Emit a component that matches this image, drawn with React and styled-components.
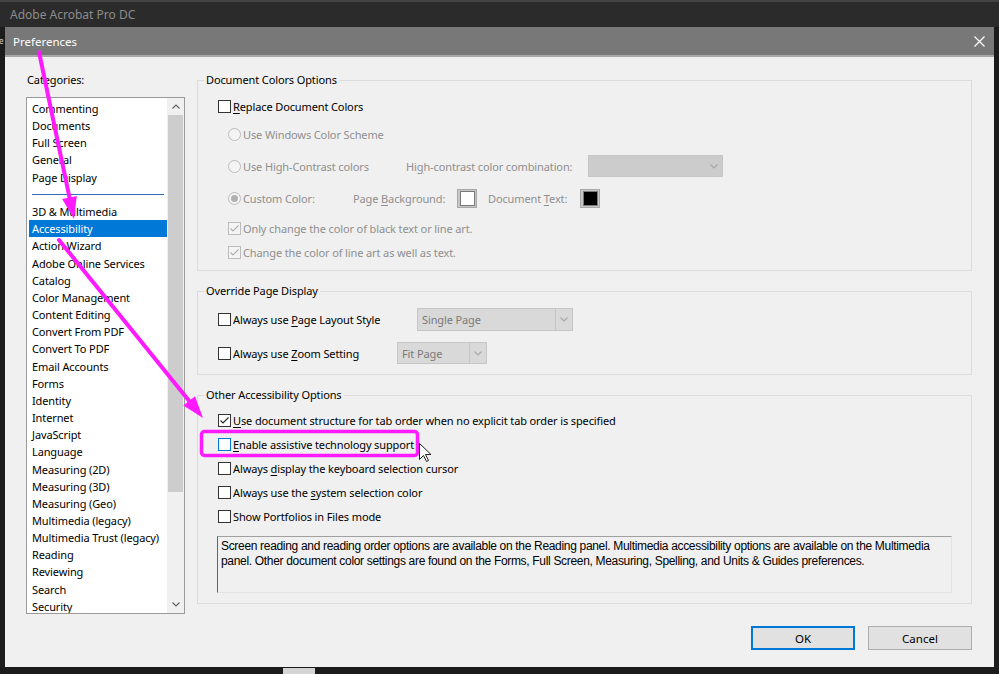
import React from 'react';
import styled, { createGlobalStyle } from 'styled-components';

const GlobalStyle = createGlobalStyle`
  html, body { margin: 0; padding: 0; }
  body {
    background: #1f1f1f;
    font-family: "Noto Sans", "Liberation Sans", Arial, sans-serif;
    font-size: 11px;
    letter-spacing: -0.12px;
    color: #000;
  }
  * { box-sizing: border-box; }
`;

const MAGENTA = '#ff1aff';

const Screen = styled.div`
  position: relative;
  width: 999px;
  height: 674px;
  overflow: hidden;
  background: #1f1f1f;
  display: flex;
  flex-direction: column;
`;

const AppBar = styled.div`
  flex: none;
  height: 27px;
  background: #2b2b2b;
  border-top: 2px solid #444;
  display: flex;
  align-items: center;
  padding-left: 10px;
  color: #8c8c8c;
  font-size: 12px;
  letter-spacing: 0;
`;

const Middle = styled.div`
  flex: none;
  height: 640px;
  display: flex;
`;

const SideStrip = styled.div`
  flex: none;
  width: ${({ $w }) => $w}px;
  background: #1c1c1c;
  overflow: hidden;
  color: #d0d0d0;
  font-size: 8px;
  padding-top: 8px;
  text-indent: -1px;
`;

const BottomStrip = styled.div`
  flex: 1;
  background: #1b1b1b;
  display: flex;
  padding-left: 283px;
`;

const Chip = styled.div`
  width: 32px;
  height: 6px;
  margin-top: 1px;
  background: #d4d4d4;
`;

const Dialog = styled.div`
  flex: none;
  width: 989px;
  display: flex;
  flex-direction: column;
  background: #f0f0f0;
`;

const TitleBar = styled.div`
  height: 30px;
  flex: none;
  background: #787878;
  border-bottom: 2px solid #a8a8a8;
  display: flex;
  align-items: center;
  justify-content: space-between;
  padding: 0 9px 0 8px;
  color: #fff;
  font-size: 11.5px;
  letter-spacing: 0;
`;

const Body = styled.div`
  flex: 1;
  padding: 15px 22px 0 21px;
  display: flex;
  flex-direction: column;
`;

const Columns = styled.div`
  display: flex;
  gap: 12px;
  align-items: flex-start;
`;

const LeftCol = styled.div`
  width: 159px;
  flex: none;
`;

const RightCol = styled.div`
  flex: 1;
  display: flex;
  flex-direction: column;
`;

const FieldLabel = styled.div`
  line-height: 16px;
  height: 16px;
  margin: 0 0 9px 1px;
`;

const ListBox = styled.div`
  height: 517px;
  border: 1px solid #9a9a9a;
  background: #fff;
  display: flex;
  overflow: hidden;
`;

const Items = styled.div`
  flex: 1;
  padding: 2px 0 0 2px;
  overflow: hidden;
`;

const Item = styled.div`
  height: 17.17px;
  line-height: 17.17px;
  padding-left: 3px;
  white-space: nowrap;
  background: ${({ $selected }) => ($selected ? '#0078d7' : 'transparent')};
  color: ${({ $selected }) => ($selected ? '#fff' : '#000')};
`;

const Separator = styled.div`
  height: 17.4px;
  display: flex;
  align-items: center;
  padding: 0 3px 0 3px;
  &::after {
    content: '';
    flex: 1;
    height: 1px;
    background: #2f6fb8;
  }
`;

const ScrollBar = styled.div`
  width: 17px;
  flex: none;
  background: #f0f0f0;
  display: flex;
  flex-direction: column;
`;

const ScrollBtn = styled.div`
  height: 17px;
  flex: none;
  display: flex;
  align-items: center;
  justify-content: center;
  margin-top: ${({ $end }) => ($end ? 'auto' : '0')};
`;

const Thumb = styled.div`
  height: 377px;
  margin: 0 1px;
  background: #cdcdcd;
`;

const Group = styled.fieldset`
  margin: ${({ $first }) => ($first ? '0' : '12px 0 0')};
  padding: 0;
  border: 1px solid #dcdcdc;
  min-inline-size: 0;
`;

const Legend = styled.legend`
  margin-left: 6px;
  padding: 0 2px;
  line-height: 16px;
  height: 16px;
`;

const GroupBody = styled.div`
  padding: ${({ $pad }) => $pad};
`;

const Row = styled.div`
  height: ${({ $h }) => $h}px;
  display: flex;
  align-items: center;
  padding-left: ${({ $indent }) => $indent || 0}px;
  margin-top: ${({ $mt }) => $mt || 0}px;
  white-space: nowrap;
`;

const Text = styled.span`
  display: inline-block;
  width: ${({ $w }) => ($w ? `${$w}px` : 'auto')};
  flex: none;
  color: ${({ $muted }) => ($muted ? '#8f8f8f' : '#000')};
`;

const Key = styled.span`
  text-decoration: underline;
  text-underline-offset: 2px;
`;

const Box = styled.span`
  flex: none;
  width: 13px;
  height: 13px;
  margin-right: 2px;
  border: 1px solid
    ${({ $disabled, $focus }) => ($disabled ? '#bcbcbc' : $focus ? '#0078d7' : '#333')};
  background: ${({ $disabled }) => ($disabled ? '#f4f4f4' : '#fff')};
  display: flex;
  align-items: center;
  justify-content: center;
`;

const Radio = styled.span`
  flex: none;
  width: 13px;
  height: 13px;
  margin-right: 2px;
  border-radius: 50%;
  border: 1px solid #bcbcbc;
  background: #f4f4f4;
  display: flex;
  align-items: center;
  justify-content: center;
  &::after {
    content: '';
    display: ${({ $checked }) => ($checked ? 'block' : 'none')};
    width: 7px;
    height: 7px;
    border-radius: 50%;
    background: #b0b0b0;
  }
`;

const Select = styled.div`
  flex: none;
  width: ${({ $w }) => $w}px;
  height: ${({ $h }) => $h}px;
  border: 1px solid #c6c6c6;
  background: ${({ $flat }) => ($flat ? '#cccccc' : '#d9d9d9')};
  display: flex;
  align-items: center;
  color: #7a7a7a;
`;

const SelectValue = styled.span`
  flex: 1;
  padding-left: 4px;
`;

const SelectArrow = styled.span`
  width: 17px;
  align-self: stretch;
  display: flex;
  align-items: center;
  justify-content: center;
  border-left: 1px solid ${({ $flat }) => ($flat ? 'transparent' : '#c6c6c6')};
`;

const Swatch = styled.span`
  flex: none;
  width: 20px;
  height: 19px;
  margin-right: ${({ $mr }) => $mr || 0}px;
  border: 1px solid #a9a9a9;
  background: #c6c6c6;
  display: flex;
  align-items: center;
  justify-content: center;
  &::after {
    content: '';
    width: 13px;
    height: 13px;
    border: 1px solid #7a7a7a;
    background: ${({ $color }) => $color};
  }
`;

const InfoBox = styled.div`
  width: 735px;
  height: 57px;
  margin: 8px 0 0 -1px;
  padding: 2px 3px;
  border-style: solid;
  border-width: 1px;
  border-color: #a0a0a0 #e3e3e3 #e3e3e3 #646464;
  font-family: "Liberation Sans", Arial, sans-serif;
  font-size: 12px;
  letter-spacing: -0.32px;
  line-height: 15px;
  white-space: nowrap;
`;

const ButtonRow = styled.div`
  display: flex;
  justify-content: flex-end;
  gap: 13px;
  margin-top: 12px;
`;

const Button = styled.button`
  width: 104px;
  height: 24px;
  font: inherit;
  font-size: 11.5px;
  color: #000;
  background: #e1e1e1;
  border: ${({ $primary }) => ($primary ? '2px solid #0078d7' : '1px solid #adadad')};
  padding: 0;
`;

const Overlay = styled.svg`
  position: absolute;
  left: 0;
  top: 0;
  pointer-events: none;
`;

const categories = [
  'Commenting', 'Documents', 'Full Screen', 'General', 'Page Display', null,
  '3D & Multimedia', 'Accessibility', 'Action Wizard', 'Adobe Online Services',
  'Catalog', 'Color Management', 'Content Editing', 'Convert From PDF',
  'Convert To PDF', 'Email Accounts', 'Forms', 'Identity', 'Internet',
  'JavaScript', 'Language', 'Measuring (2D)', 'Measuring (3D)', 'Measuring (Geo)',
  'Multimedia (legacy)', 'Multimedia Trust (legacy)', 'Reading', 'Reviewing',
  'Search', 'Security',
];

const Chevron = ({ up, color = '#606060' }) => (
  <svg width="8" height="5" viewBox="0 0 8 5">
    <polyline
      points={up ? '0.5,4.5 4,1 7.5,4.5' : '0.5,0.5 4,4 7.5,0.5'}
      fill="none"
      stroke={color}
      strokeWidth="1.1"
    />
  </svg>
);

const Check = ({ color }) => (
  <svg width="11" height="11" viewBox="0 0 11 11">
    <polyline points="1.5,5.5 4,8 9.5,2.5" fill="none" stroke={color} strokeWidth="1.1" />
  </svg>
);

const CheckBox = ({ checked, disabled, focus }) => (
  <Box $disabled={disabled} $focus={focus}>
    {checked && <Check color={disabled ? '#b0b0b0' : '#222'} />}
  </Box>
);

const Arrow = ({ from, to, len = 22, half = 7.5 }) => {
  const [x1, y1] = from;
  const [x2, y2] = to;
  const l = Math.hypot(x2 - x1, y2 - y1);
  const ux = (x2 - x1) / l;
  const uy = (y2 - y1) / l;
  const bx = x2 - ux * len;
  const by = y2 - uy * len;
  return (
    <g>
      <line x1={x1} y1={y1} x2={bx + ux * 2} y2={by + uy * 2} stroke={MAGENTA} strokeWidth="4" strokeLinecap="round" />
      <polygon
        points={`${x2},${y2} ${bx - uy * half},${by + ux * half} ${bx + uy * half},${by - ux * half}`}
        fill={MAGENTA}
      />
    </g>
  );
};

const Annotations = () => (
  <Overlay width="999" height="674" viewBox="0 0 999 674">
    <Arrow from={[39, 52]} to={[74, 219]} />
    <Arrow from={[59, 240]} to={[203, 418]} />
    <rect x="201.5" y="431.5" width="216" height="24" rx="3" fill="none" stroke={MAGENTA} strokeWidth="3.5" />
    <path
      d="M419.5 443.5 L419.5 459.5 L423.5 455.5 L426.5 461.5 L428.5 460.5 L425.5 454.5 L431 454.5 Z"
      fill="#fff"
      stroke="#222"
      strokeWidth="1"
      strokeLinejoin="round"
    />
  </Overlay>
);

const CloseIcon = () => (
  <svg width="11" height="11" viewBox="0 0 11 11">
    <path d="M0.5 0.5 L10.5 10.5 M10.5 0.5 L0.5 10.5" stroke="#fff" strokeWidth="1.2" />
  </svg>
);

const App = () => (
  <Screen>
    <GlobalStyle />
    <AppBar>Adobe Acrobat Pro DC</AppBar>
    <Middle>
      <SideStrip $w={5}>e</SideStrip>
      <Dialog>
        <TitleBar>
          <span>Preferences</span>
          <CloseIcon />
        </TitleBar>
        <Body>
          <Columns>
            <LeftCol>
              <FieldLabel>Categories:</FieldLabel>
              <ListBox>
                <Items>
                  {categories.map((c, i) =>
                    c === null ? (
                      <Separator key={i} />
                    ) : (
                      <Item key={i} $selected={c === 'Accessibility'}>{c}</Item>
                    )
                  )}
                </Items>
                <ScrollBar>
                  <ScrollBtn><Chevron up /></ScrollBtn>
                  <Thumb />
                  <ScrollBtn $end><Chevron /></ScrollBtn>
                </ScrollBar>
              </ListBox>
            </LeftCol>

            <RightCol>
              <Group $first>
                <Legend>Document Colors Options</Legend>
                <GroupBody $pad="6px 0 6px 20px">
                  <Row $h={24}>
                    <CheckBox />
                    <Text><Key>R</Key>eplace Document Colors</Text>
                  </Row>
                  <Row $h={32} $indent={10}>
                    <Radio />
                    <Text $muted>Use Windows Color Scheme</Text>
                  </Row>
                  <Row $h={32} $indent={10}>
                    <Radio />
                    <Text $muted $w={163}>Use High-Contrast colors</Text>
                    <Text $muted $w={182}>Hi<Key>g</Key>h-contrast color combination:</Text>
                    <Select $w={135} $h={22} $flat>
                      <SelectValue />
                      <SelectArrow $flat><Chevron color="#a8a8a8" /></SelectArrow>
                    </Select>
                  </Row>
                  <Row $h={32} $indent={10}>
                    <Radio $checked />
                    <Text $muted $w={110}>Custom Color:</Text>
                    <Text $muted $w={104}>Page <Key>B</Key>ackground:</Text>
                    <Swatch $color="#fff" $mr={11} />
                    <Text $muted $w={92}>Document <Key>T</Key>ext:</Text>
                    <Swatch $color="#000" />
                  </Row>
                  <Row $h={24} $indent={10} $mt={2}>
                    <CheckBox checked disabled />
                    <Text $muted>Only change the color of black text or line art.</Text>
                  </Row>
                  <Row $h={24} $indent={10}>
                    <CheckBox checked disabled />
                    <Text $muted>Change the color of line art as well as text.</Text>
                  </Row>
                </GroupBody>
              </Group>

              <Group>
                <Legend>Override Page Display</Legend>
                <GroupBody $pad="3px 0 4px 20px">
                  <Row $h={34}>
                    <CheckBox />
                    <Text $w={184}>Always use <Key>P</Key>age Layout Style</Text>
                    <Select $w={156} $h={23}>
                      <SelectValue>Single Page</SelectValue>
                      <SelectArrow><Chevron color="#a8a8a8" /></SelectArrow>
                    </Select>
                  </Row>
                  <Row $h={34}>
                    <CheckBox />
                    <Text $w={164}>Always use <Key>Z</Key>oom Setting</Text>
                    <Select $w={90} $h={22}>
                      <SelectValue>Fit Page</SelectValue>
                      <SelectArrow><Chevron color="#a8a8a8" /></SelectArrow>
                    </Select>
                  </Row>
                </GroupBody>
              </Group>

              <Group>
                <Legend>Other Accessibility Options</Legend>
                <GroupBody $pad="5px 0 10px 20px">
                  <Row $h={24}>
                    <CheckBox checked />
                    <Text><Key>U</Key>se document structure for tab order when no explicit tab order is specified</Text>
                  </Row>
                  <Row $h={24}>
                    <CheckBox focus />
                    <Text><Key>E</Key>nable assistive technology support</Text>
                  </Row>
                  <Row $h={24}>
                    <CheckBox />
                    <Text>Always <Key>d</Key>isplay the keyboard selection cursor</Text>
                  </Row>
                  <Row $h={24}>
                    <CheckBox />
                    <Text>Always use the <Key>s</Key>ystem selection color</Text>
                  </Row>
                  <Row $h={24}>
                    <CheckBox />
                    <Text>Show Portfolios in Files mode</Text>
                  </Row>
                  <InfoBox>
                    Screen reading and reading order options are available on the Reading panel. Multimedia accessibility options are available on the Multimedia
                    <br />
                    panel. Other document color settings are found on the Forms, Full Screen, Measuring, Spelling, and Units &amp; Guides preferences.
                  </InfoBox>
                </GroupBody>
              </Group>
            </RightCol>
          </Columns>

          <ButtonRow>
            <Button $primary>OK</Button>
            <Button>Cancel</Button>
          </ButtonRow>
        </Body>
      </Dialog>
      <SideStrip $w={5} />
    </Middle>
    <BottomStrip>
      <Chip />
    </BottomStrip>
    <Annotations />
  </Screen>
);

export default App;
